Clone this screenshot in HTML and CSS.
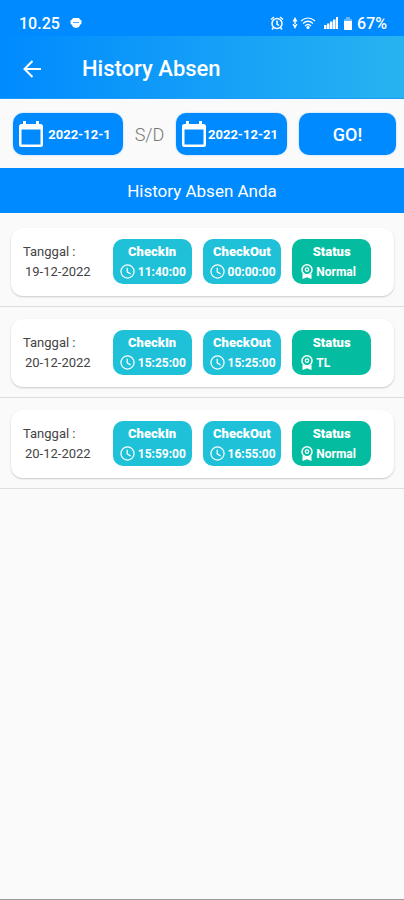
FILE: index.html
```html
<!DOCTYPE html>
<html lang="id">
<head>
<meta charset="utf-8">
<meta name="viewport" content="width=device-width, initial-scale=1">
<title>History Absen</title>
<link rel="stylesheet" href="styles.css">
</head>
<body>
<svg class="defs" aria-hidden="true">
  <symbol id="calendar" viewBox="0 0 24 26">
    <path fill="currentColor" fill-rule="evenodd" d="M4 0h3v3h10V0h3v3h1.500a2.500 2.500 0 0 1 2.500 2.500v18a2.500 2.500 0 0 1-2.500 2.500h-19A2.500 2.500 0 0 1 0 23.500v-18A2.500 2.500 0 0 1 2.500 3H4zM2.500 8.500v15h19v-15z"/>
  </symbol>
  <symbol id="clock" viewBox="0 0 24 24">
    <g fill="none" stroke="currentColor" stroke-width="2"><circle cx="12" cy="12" r="10.500"/><path d="M11.500 6v6.500l5.500 3.500"/></g>
  </symbol>
  <symbol id="medal" viewBox="0 0 24 30">
    <circle cx="12" cy="11.500" r="10" fill="none" stroke="currentColor" stroke-width="3"/>
    <circle cx="12" cy="11" r="3.500" fill="none" stroke="currentColor" stroke-width="2.500"/>
    <path fill="currentColor" d="M3 19c5 4 13 4 18 0v11l-4-1.500-5-2-5 2L3 30z"/>
  </symbol>
</svg>
<header>
  <div class="status-bar">
    <span>10.25</span>
    <svg class="notice" viewBox="0 0 12 12" width="12" height="12"><path fill="#fff" d="M3 1h6l1 1.500 1.500 1v3L10 8l-1 2-3 1-3-1-1-2L.5 6.500v-3l1.500-1z"/><path stroke="#4aa8fa" d="M3 5.500h6"/></svg>
    <div class="indicators">
      <svg viewBox="0 0 14 14" width="14" height="14" fill="none" stroke="#fff" stroke-width="1.500"><circle cx="7" cy="7.500" r="5"/><path d="M1 3.500 4 1M13 3.500 10 1M7 4.500V8l2 1.500M3.500 11.500 2 13.500M10.500 11.500l1.500 2"/></svg>
      <svg class="arrows" viewBox="0 0 6 12" width="6" height="12"><path fill="#fff" d="M3 0l2.500 4.500h-5zM3 12l2.500-5h-5zM2.300 4h1.400v4H2.300z"/></svg>
      <svg viewBox="0 0 16 14" width="16" height="14" fill="none" stroke="#fff" stroke-width="1.200"><path d="M1 5q7-6 14 0M3 7.500q5-4.500 10 0M5 10q3-3 6 0"/><circle cx="8" cy="11.500" r="1" fill="#fff"/></svg>
      <svg class="signal" viewBox="0 0 14 12" width="14" height="12" fill="#fff"><path d="M0 8h2.500v4H0zM3 6.500h2.500V12H3zM6 4.500h2.500V12H6zM9 2.500h2.500V12H9zM12 0h2v12h-2z"/></svg>
      <svg class="battery" viewBox="0 0 8 13" width="8" height="13"><path fill="#66b6fb" d="M2 0h4v2h2v3H0V2h2z"/><path fill="#fff" d="M0 4h8v9H0z"/></svg>
      <span>67%</span>
    </div>
  </div>
  <div class="app-bar">
    <button class="back" aria-label="Kembali"><svg viewBox="0 0 18 18" width="18" height="18" fill="none" stroke="#fff" stroke-width="2"><path d="M18 9H1.500M9.500 1 1.500 9l8 8"/></svg></button>
    <h1>History Absen</h1>
  </div>
</header>
<main>
  <form class="filter">
    <button type="button" class="date"><svg width="24" height="26"><use href="#calendar"/></svg><span>2022-12-1</span></button>
    <span class="until">S/D</span>
    <button type="button" class="date"><svg width="24" height="26"><use href="#calendar"/></svg><span>2022-12-21</span></button>
    <button type="button" class="go">GO!</button>
  </form>
  <h2>History Absen Anda</h2>
  <ul class="list">
    <li>
      <article class="card">
        <div class="day"><span>Tanggal :</span><time>19-12-2022</time></div>
        <div class="chip"><b>CheckIn</b><span><svg width="15" height="15"><use href="#clock"/></svg>11:40:00</span></div>
        <div class="chip"><b>CheckOut</b><span><svg width="15" height="15"><use href="#clock"/></svg>00:00:00</span></div>
        <div class="chip state"><b>Status</b><span><svg width="12" height="15"><use href="#medal"/></svg>Normal</span></div>
      </article>
    </li>
    <li>
      <article class="card">
        <div class="day"><span>Tanggal :</span><time>20-12-2022</time></div>
        <div class="chip"><b>CheckIn</b><span><svg width="15" height="15"><use href="#clock"/></svg>15:25:00</span></div>
        <div class="chip"><b>CheckOut</b><span><svg width="15" height="15"><use href="#clock"/></svg>15:25:00</span></div>
        <div class="chip state"><b>Status</b><span><svg width="12" height="15"><use href="#medal"/></svg>TL</span></div>
      </article>
    </li>
    <li>
      <article class="card">
        <div class="day"><span>Tanggal :</span><time>20-12-2022</time></div>
        <div class="chip"><b>CheckIn</b><span><svg width="15" height="15"><use href="#clock"/></svg>15:59:00</span></div>
        <div class="chip"><b>CheckOut</b><span><svg width="15" height="15"><use href="#clock"/></svg>16:55:00</span></div>
        <div class="chip state"><b>Status</b><span><svg width="12" height="15"><use href="#medal"/></svg>Normal</span></div>
      </article>
    </li>
  </ul>
</main>
</body>
</html>
```
FILE: styles.css
```css
* {
  box-sizing: border-box;
}

body {
  margin: 0;
  min-height: 100vh;
  background: #fafafa;
  border-bottom: 1px solid #999;
  font-family: Roboto, sans-serif;
  color: #444;
}

.defs {
  position: absolute;
  width: 0;
  height: 0;
}

svg {
  display: block;
  flex: none;
}

button {
  border: 0;
  padding: 0;
  font: inherit;
  color: #fff;
  background: none;
}

.status-bar {
  display: flex;
  align-items: center;
  height: 36px;
  padding: 10px 17px 0 19px;
  background: #008aff;
  color: #fff;
  font-size: 16px;
  font-weight: 500;
}

.notice {
  margin-left: 10px;
}

.indicators {
  display: flex;
  align-items: center;
  margin-left: auto;
}

.arrows {
  margin: 0 2px 0 8px;
}

.signal {
  margin: 0 6px 0 8px;
}

.battery {
  margin-right: 5px;
}

.app-bar {
  display: flex;
  align-items: center;
  height: 63px;
  padding: 3px 23px 0;
  background: linear-gradient(90deg, #008aff, #27b3f1);
  border-bottom: 1px solid #1a9cfa;
}

h1,
h2 {
  margin: 0;
  color: #fff;
}

h1 {
  margin-left: 41px;
  font-size: 22px;
  font-weight: 500;
}

.filter {
  display: grid;
  grid-template-columns: 110fr 53px 111fr 12px 97fr;
  align-items: center;
  height: 69px;
  padding: 1px 8px 0 13px;
}

.date,
.go {
  min-width: 0;
  height: 42px;
  border-radius: 10px;
  background: #008aff;
  box-shadow: 0 0 2px #008aff66;
}

.date {
  display: flex;
  align-items: center;
  padding: 0 7px 0 6px;
  font-size: 13px;
  font-weight: 700;
  white-space: nowrap;
}

.date span {
  flex: 1;
  text-align: center;
}

.until {
  text-align: center;
  color: #777;
  font-size: 18px;
  font-weight: 300;
}

.go {
  grid-column: 5;
  font-size: 18px;
  font-weight: 500;
}

h2 {
  height: 45px;
  line-height: 46px;
  background: #008aff;
  font-size: 17px;
  font-weight: 400;
  text-align: center;
}

.list {
  list-style: none;
  margin: 0;
  padding: 3px 0 0;
}

.list li {
  padding: 12px 10px 10px 11px;
  border-bottom: 1px solid #dedede;
}

.card {
  display: grid;
  grid-template-columns: 79fr 79fr 79fr 79fr;
  column-gap: 11px;
  height: 68px;
  padding: 11px 23px 12px 12px;
  border-radius: 12px;
  background: #fff;
  box-shadow: 0 1px 2px #00000033;
}

.day,
.chip {
  padding-top: 3px;
  font-size: 13px;
  line-height: 20px;
}

.day {
  white-space: nowrap;
}

.day span,
.day time {
  display: block;
}

.day time {
  padding-left: 2px;
}

.chip {
  min-width: 0;
  padding-left: 7px;
  border-radius: 10px;
  background: #1ec1d8;
  color: #fff;
  font-weight: 700;
}

.chip b {
  display: block;
  padding-right: 7px;
  text-align: center;
}

.chip span {
  display: flex;
  align-items: center;
  gap: 3px;
  font-size: 12px;
}

.chip svg {
  margin-bottom: 2px;
}

.state {
  background: #04bda0;
}

.state span {
  padding-left: 2px;
}
```
